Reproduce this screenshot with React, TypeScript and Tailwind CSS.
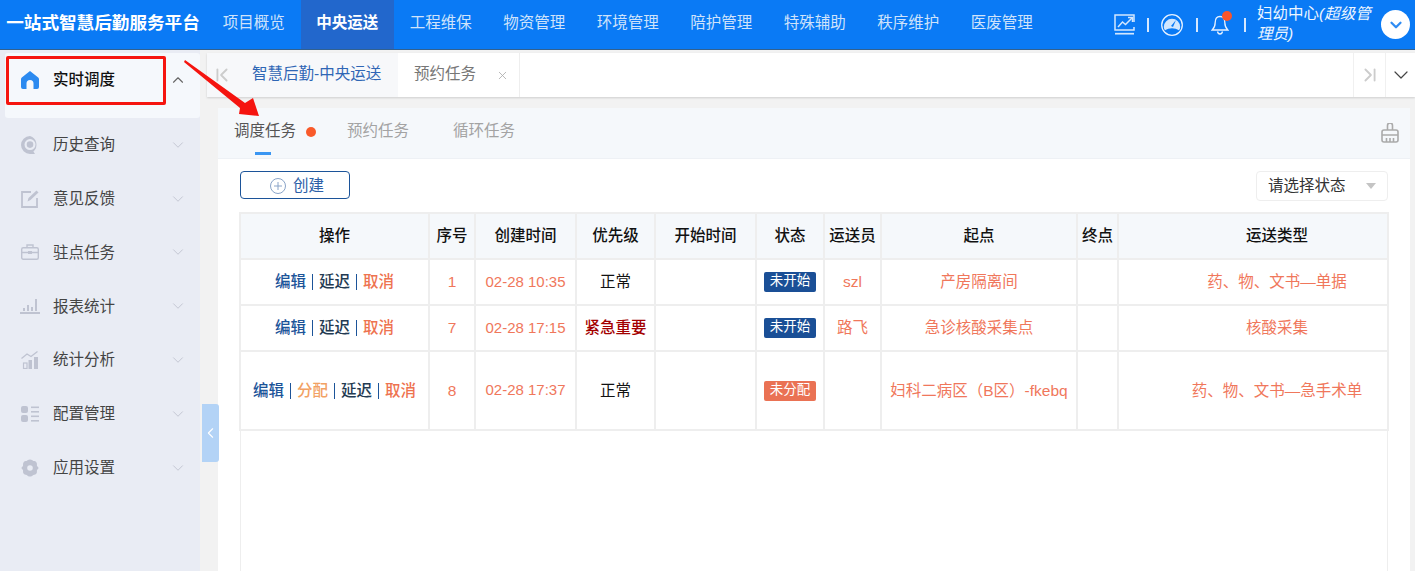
import { ChevronDown, ChevronUp, ChevronLeft, ChevronFirst, ChevronLast, X } from "lucide-react";
import type { ReactNode } from "react";

const navItems = ["项目概览", "中央运送", "工程维保", "物资管理", "环境管理", "陪护管理", "特殊辅助", "秩序维护", "医废管理"];

const C = "#bfc3d1";

const sideItems: { label: string; icon: ReactNode }[] = [
  {
    label: "历史查询",
    icon: (
      <svg width="18" height="18" viewBox="0 0 18 18">
        <path d="M9 0a9 9 0 1 0 0 18h5l-1.600-2.600A9 9 0 0 0 9 0z" fill={C} />
        <circle cx="9" cy="8.600" r="4.400" fill="none" stroke="#e9ecf4" strokeWidth="2.200" />
      </svg>
    ),
  },
  {
    label: "意见反馈",
    icon: (
      <svg width="18" height="18" viewBox="0 0 18 18" fill="none" stroke={C} strokeWidth="1.800">
        <path d="M10 2H1v15h15V8" />
        <path d="M6.500 11.500l1-3.500 8-7.500 2 2-8 7.500z" fill={C} stroke="none" />
      </svg>
    ),
  },
  {
    label: "驻点任务",
    icon: (
      <svg width="18" height="16" viewBox="0 0 18 16" fill="none" stroke={C} strokeWidth="1.400">
        <rect x="0.700" y="3.700" width="16.600" height="11.600" rx="1.500" />
        <path d="M6 3.500V1h6v2.500M1 8.500h16" />
        <rect x="7" y="7" width="4" height="3" fill={C} stroke="none" />
      </svg>
    ),
  },
  {
    label: "报表统计",
    icon: (
      <svg width="20" height="16" viewBox="0 0 20 16" fill={C}>
        <rect x="0" y="14" width="20" height="2" />
        <rect x="3" y="10" width="2" height="3" />
        <rect x="7" y="7" width="2" height="6" />
        <rect x="11" y="9" width="2" height="4" />
        <rect x="15" y="1" width="2" height="12" />
      </svg>
    ),
  },
  {
    label: "统计分析",
    icon: (
      <svg width="18" height="18" viewBox="0 0 18 18" fill={C}>
        <path d="M0.500 7.500L6 3l4 2.500L16.500 0.500" fill="none" stroke={C} strokeWidth="1.300" />
        <rect x="2.500" y="12" width="3.500" height="5.500" fill="none" stroke={C} strokeWidth="1.200" />
        <rect x="7.500" y="9" width="3.500" height="9" />
        <rect x="13" y="6" width="4" height="12" />
      </svg>
    ),
  },
  {
    label: "配置管理",
    icon: (
      <svg width="18" height="16" viewBox="0 0 18 16" fill={C}>
        <rect x="0" y="0" width="7" height="7" rx="2" />
        <rect x="0" y="9" width="7" height="7" rx="2" />
        <rect x="10" y="0.500" width="8" height="1.600" />
        <rect x="10" y="5" width="8" height="1.600" />
        <rect x="10" y="9.500" width="8" height="1.600" />
        <rect x="10" y="14" width="8" height="1.600" />
      </svg>
    ),
  },
  {
    label: "应用设置",
    icon: (
      <svg width="18" height="18" viewBox="0 0 18 18">
        <path
          d="M9 0.500c1.600 0 2.600 1 3.400 1.600 1.200 0 2.600.4 3.200 1.600.6 1.100.2 2.200.4 3.200.6.7 1.500 1.200 1.500 2.100s-.9 1.400-1.500 2.100c-.2 1 .2 2.100-.4 3.200-.6 1.200-2 1.600-3.200 1.600-.8.600-1.800 1.600-3.400 1.600s-2.600-1-3.400-1.600c-1.200 0-2.600-.4-3.200-1.600-.6-1.100-.2-2.200-.4-3.200C1.400 10.400.5 9.900.5 9s.9-1.400 1.500-2.100c.2-1-.2-2.100.4-3.200.6-1.200 2-1.600 3.200-1.600C6.400 1.500 7.400.5 9 .5z"
          fill={C}
        />
        <circle cx="9" cy="9" r="2.800" fill="#e9ecf4" />
      </svg>
    ),
  },
];

const columns = [
  { label: "操作", w: 189 },
  { label: "序号", w: 46 },
  { label: "创建时间", w: 101 },
  { label: "优先级", w: 79 },
  { label: "开始时间", w: 101 },
  { label: "状态", w: 68 },
  { label: "运送员", w: 57 },
  { label: "起点", w: 196 },
  { label: "终点", w: 41 },
  { label: "运送类型", w: 270 },
];

const rows = [
  { id: "1", ops: ["编辑", "延迟", "取消"], time: "02-28 10:35", level: "正常", status: "未开始", person: "szl", from: "产房隔离间", type: "药、物、文书—单据", tall: false },
  { id: "7", ops: ["编辑", "延迟", "取消"], time: "02-28 17:15", level: "紧急重要", status: "未开始", person: "路飞", from: "急诊核酸采集点", type: "核酸采集", tall: false },
  { id: "8", ops: ["编辑", "分配", "延迟", "取消"], time: "02-28 17:37", level: "正常", status: "未分配", person: "", from: "妇科二病区（B区）-fkebq", type: "药、物、文书—急手术单", tall: true },
];

const opColor: Record<string, string> = {
  编辑: "text-[#1c5499]",
  分配: "text-[#f2a163]",
  延迟: "text-[#233a52]",
  取消: "text-[#ee7350]",
};

function OpLinks({ ops }: { ops: string[] }) {
  return (
    <div className="flex items-center justify-center font-medium">
      {ops.map((op, i) => (
        <span key={op} className="flex items-center">
          {i > 0 && <span className="mx-[6px] h-4 w-px bg-[#1c5499]" />}
          <span className={opColor[op]}>{op}</span>
        </span>
      ))}
    </div>
  );
}

function HeaderIcons() {
  return (
    <div className="flex items-center">
      <svg width="21" height="21" viewBox="0 0 21 21" fill="none" stroke="#d3e7fe" strokeWidth="1.500" className="mr-[12px]">
        <path d="M20 8V1H1v15h19v-3" />
        <path d="M4 13l4.500-5 3 2.500L18 4" />
        <path d="M14 3.500H18.500V8" />
        <path d="M1 19.700h19" strokeWidth="1.700" />
      </svg>
      <span className="h-3.5 w-0.5 bg-[#d6e8fe]" />
      <svg width="22" height="22" viewBox="0 0 22 22" fill="none" className="ml-[12px] mr-[13px]">
        <circle cx="11" cy="11" r="10.300" stroke="#e6f1ff" strokeWidth="1.300" />
        <path d="M2.800 13a8.200 8.200 0 0 1 16.400 0c0 1.300-.4 2.300-1.200 3.300-2-1.400-4.500-2.100-7-2.100s-5 .7-7 2.100c-.8-1-1.200-2-1.200-3.300z" fill="#d3e7fe" />
        <path d="M10 12l5-6-3 7z" fill="#0a7af5" />
      </svg>
      <span className="h-3.5 w-0.5 bg-[#d6e8fe]" />
      <div className="relative ml-[13px] mr-[15px] h-[22px] w-[18px]">
        <svg width="18" height="22" viewBox="0 0 18 22" fill="none" stroke="#e6f1ff" strokeWidth="1.300">
          <path d="M9 2.500c-3.500 0-4.800 3-4.800 6 0 3.500-1 5.500-3 7.500h15.600c-2-2-3-4-3-7.500 0-3-1.300-6-4.800-6z" />
          <path d="M6.500 17.500c.3 1.500 1.300 2.500 2.500 2.500s2.200-1 2.500-2.500" />
        </svg>
        <span className="absolute right-[-3px] top-[-3px] h-2.5 w-2.5 rounded-full bg-[#f9552b]" />
      </div>
      <span className="h-3.5 w-0.5 bg-[#d6e8fe]" />
    </div>
  );
}

export default function App() {
  return (
    <div className="relative h-[571px] w-[1415px] overflow-hidden bg-[#f2f2f2] font-['Liberation_Sans','Noto_Sans_CJK_SC',sans-serif] text-[15.5px]">
      <header className="flex h-[50px] items-stretch border-b border-[#33618f] bg-[#0a7af5] text-white">
        <div className="flex w-[207px] items-center justify-center pb-[2px] pr-[1px] text-[17.6px] font-bold">一站式智慧后勤服务平台</div>
        <nav className="flex">
          {navItems.map((item) => (
            <div
              key={item}
              className={
                item === "中央运送"
                  ? "flex w-[93.500px] items-center justify-center bg-[#2267cc] pb-[3px] font-bold text-white"
                  : "flex w-[93.500px] items-center justify-center pb-[3px] text-[#cfe3fb]"
              }
            >
              {item}
            </div>
          ))}
        </nav>
        <div className="ml-auto flex items-center pr-[5px]">
          <HeaderIcons />
          <div className="ml-[11px] w-[115px] pb-[2px] leading-[20px] text-[#eef6ff]">
            妇幼中心<em>(超级管理员)</em>
          </div>
          <div className="ml-[9px] flex h-[29px] w-[29px] items-center justify-center rounded-full bg-white">
            <ChevronDown size={18} strokeWidth={3} className="text-[#2f8cf3]" />
          </div>
        </div>
      </header>

      <div className="flex h-[521px]">
        <aside className="h-full w-[200px] bg-[#e9ecf4] pl-[5px] pt-[3px]">
          <div className="h-[65px] rounded-[3px] bg-[#f5f8fc]">
            <div className="flex h-[53px] items-center pl-[16px] pr-[13px]">
              <svg width="18" height="18" viewBox="0 0 18 18" fill="#2b8af0">
                <path d="M9 0l8.200 6.500c.5.400.8 1 .8 1.700V16a2 2 0 0 1-2 2h-3.500v-5.500a3.500 3.500 0 0 0-7 0V18H2a2 2 0 0 1-2-2V8.200c0-.7.300-1.300.8-1.700z" />
              </svg>
              <span className="ml-[14px] font-medium text-[#111]">实时调度</span>
              <ChevronUp size={18} strokeWidth={1.500} className="ml-auto text-[#666]" />
            </div>
          </div>
          {sideItems.map((item) => (
            <div key={item.label} className="flex h-[53.800px] items-center pr-[13px]">
              <div className="ml-[15px] flex w-[20px] items-center justify-center">{item.icon}</div>
              <span className="ml-[13px] text-[#444]">{item.label}</span>
              <ChevronDown size={18} strokeWidth={1.200} className="ml-auto text-[#bfc3cf]" />
            </div>
          ))}
        </aside>

        <main className="ml-[7px] flex min-w-0 flex-1 flex-col pt-[3px]">
          <div className="flex h-[44px] bg-white shadow-[0_1px_2px_rgba(0,0,0,0.15)]">
            <div className="flex w-[29px] items-center justify-center bg-[#f7f8fa]">
              <ChevronFirst size={22} strokeWidth={2} className="text-[#cccccc]" />
            </div>
            <div className="flex w-[162px] items-center bg-[#f7f8fa] pb-[2px] pl-[16px] text-[#2f66b5]">智慧后勤-中央运送</div>
            <div className="flex w-[122px] items-center border-r border-[#eee] pb-[2px] pl-[16px] text-[#777]">
              预约任务
              <X size={13} strokeWidth={1.500} className="ml-[20px] mt-[2px] text-[#aaa]" />
            </div>
            <div className="ml-auto flex w-[33px] items-center justify-center border-x border-[#f0f0f0]">
              <ChevronLast size={22} strokeWidth={2} className="text-[#cccccc]" />
            </div>
            <div className="flex w-[29px] items-center justify-center">
              <ChevronDown size={24} strokeWidth={1.200} className="text-[#444]" />
            </div>
          </div>

          <section className="ml-[11px] mr-[5px] mt-[11px] flex min-h-0 flex-1 flex-col bg-white">
            <div className="flex h-[51px] items-center border-b border-[#eef1f5] bg-[#f5f8fb] pl-[16px] pr-[11px]">
              <div className="relative flex h-full items-center pb-[5px] text-[#555]">
                调度任务
                <span className="absolute bottom-[3px] left-[21px] h-[3px] w-4 bg-[#3a96f2]" />
              </div>
              <span className="mb-[3px] ml-[10px] h-2.5 w-2.5 rounded-full bg-[#f95a2a]" />
              <span className="ml-[31px] pb-[5px] text-[#a3a3a3]">预约任务</span>
              <span className="ml-[44px] pb-[5px] text-[#a3a3a3]">循环任务</span>
              <svg width="18" height="20" viewBox="0 0 18 20" fill="none" stroke="#aaa" strokeWidth="1.600" className="ml-auto">
                <path d="M6.500 7V2.500a2.500 2.500 0 0 1 5 0V7" />
                <rect x="1" y="7" width="16" height="12" rx="2" />
                <path d="M1 12h16M5.500 15v4M9 15v4M12.500 15v4" />
              </svg>
            </div>

            <div className="flex flex-1 flex-col px-[22px] pt-[12px]">
              <div className="flex items-start justify-between">
                <button className="flex h-[28px] w-[110px] items-center justify-center rounded-[4px] border border-[#1c5499] pl-[4px] pt-[1px] text-[#2c60a8]">
                  <svg width="16" height="16" viewBox="0 0 16 16" fill="none" stroke="#8aa4c8" className="mr-[7px]">
                    <circle cx="8" cy="8" r="7.500" />
                    <path d="M8 4v8M4 8h8" />
                  </svg>
                  创建
                </button>
                <div className="flex h-[30px] w-[132px] items-center justify-between rounded-[4px] border border-[#eee] pl-[11px] pr-[11px] text-[#333]">
                  请选择状态
                  <span className="border-x-[5.500px] border-t-[6px] border-x-transparent border-t-[#c4c4c4]" />
                </div>
              </div>

              <div className="mt-[11px] flex-1 shadow-[inset_1px_0_#eee,inset_-1px_0_#eee]">
                <table className="-ml-px w-[1148px] table-fixed border-collapse">
                  <colgroup>
                    {columns.map((c) => (
                      <col key={c.label} style={{ width: c.w }} />
                    ))}
                  </colgroup>
                  <thead>
                    <tr className="h-[46px] bg-[#f5f8fb]">
                      {columns.map((c) => (
                        <th
                          key={c.label}
                          className={
                            c.label === "运送类型"
                              ? "whitespace-nowrap border-2 border-[#eee] p-0 pl-[48px] font-medium text-[#111]"
                              : "whitespace-nowrap border-2 border-[#eee] p-0 font-medium text-[#111]"
                          }
                        >
                          {c.label}
                        </th>
                      ))}
                    </tr>
                  </thead>
                  <tbody className="text-center text-[#f0775b]">
                    {rows.map((r) => (
                      <tr key={r.id} className={r.tall ? "h-[79px]" : "h-[46px]"}>
                        <td className="border-2 border-[#eee] p-0"><OpLinks ops={r.ops} /></td>
                        <td className="border-2 border-[#eee] p-0">{r.id}</td>
                        <td className="border-2 border-[#eee] p-0 text-[15px]">{r.time}</td>
                        <td className={r.level === "正常" ? "border-2 border-[#eee] p-0 text-[#111]" : "border-2 border-[#eee] p-0 font-medium text-[#a30000]"}>
                          {r.level}
                        </td>
                        <td className="border-2 border-[#eee] p-0" />
                        <td className="border-2 border-[#eee] p-0">
                          <div className="flex justify-center">
                            <span className={r.status === "未分配" ? "h-5 w-[52px] rounded-[2px] bg-[#ea7254] text-[13.500px] leading-[18px] text-white" : "h-5 w-[52px] rounded-[2px] bg-[#1a4f96] text-[13.500px] leading-[18px] text-white"}>
                              {r.status}
                            </span>
                          </div>
                        </td>
                        <td className="border-2 border-[#eee] p-0">{r.person}</td>
                        <td className="whitespace-nowrap border-2 border-[#eee] p-0">{r.from}</td>
                        <td className="border-2 border-[#eee] p-0" />
                        <td className="border-2 border-[#eee] p-0 pl-[48px]">{r.type}</td>
                      </tr>
                    ))}
                  </tbody>
                </table>
              </div>
            </div>
          </section>
        </main>
      </div>

      {/* collapse handle, sits over the sidebar edge */}
      <div className="absolute left-[202px] top-[404px] flex h-[58px] w-[17px] items-center justify-center rounded-r-[3px] bg-[#b3d3f6]">
        <ChevronLeft size={20} strokeWidth={1.500} className="text-white" />
      </div>

      {/* red annotation marks drawn on the screenshot */}
      <div className="absolute left-[6px] top-[56px] h-[49px] w-[160px] rounded-[2px] border-[3px] border-[#f5140f]" />
      <svg width="90" height="65" viewBox="0 0 90 65" className="absolute left-[180px] top-[58px]">
        <path d="M5 2L65 45 73 40 79 58 59 56 60 50 4 4z" fill="#f5140f" />
      </svg>
    </div>
  );
}
